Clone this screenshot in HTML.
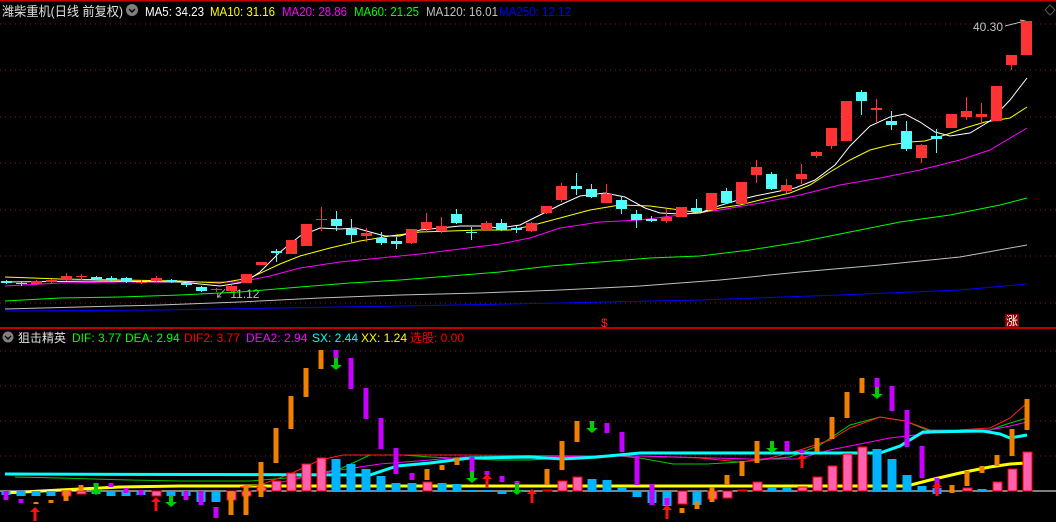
<!DOCTYPE html>
<html><head><meta charset="utf-8"><style>
html,body{margin:0;padding:0;background:#000;width:1056px;height:522px;overflow:hidden}
svg{display:block}
text{font-family:"Liberation Sans","Noto Sans CJK SC",sans-serif;font-size:12px}
</style></head><body>
<svg id="s" width="1056" height="522" xmlns="http://www.w3.org/2000/svg">
<rect width="1056" height="522" fill="#000"/>
<line x1="0" y1="0.5" x2="1056" y2="0.5" stroke="#c00000" stroke-width="2"/>
<line x1="0" y1="328" x2="1056" y2="328" stroke="#c00000" stroke-width="2"/>
<g stroke="#8a1a1a" stroke-dasharray="1,4" stroke-width="1">
<line x1="0" y1="24" x2="1056" y2="24"/><line x1="0" y1="70" x2="1056" y2="70"/><line x1="0" y1="117" x2="1056" y2="117"/><line x1="0" y1="163" x2="1056" y2="163"/><line x1="0" y1="210" x2="1056" y2="210"/><line x1="0" y1="256" x2="1056" y2="256"/><line x1="0" y1="303" x2="1056" y2="303"/>
<line x1="0" y1="351" x2="1056" y2="351"/><line x1="0" y1="386" x2="1056" y2="386"/><line x1="0" y1="421" x2="1056" y2="421"/><line x1="0" y1="456" x2="1056" y2="456"/>
</g>
<g font-size="13">
<text x="2" y="16" fill="#e0e0e0" style="font-size:13px" textLength="121" lengthAdjust="spacingAndGlyphs">潍柴重机(日线 前复权)</text>
<text x="145" y="16" fill="#fff" style="font-size:13px" textLength="59" lengthAdjust="spacingAndGlyphs">MA5: 34.23</text>
<text x="210" y="16" fill="#ffff00" style="font-size:13px" textLength="65" lengthAdjust="spacingAndGlyphs">MA10: 31.16</text>
<text x="282" y="16" fill="#ff00ff" style="font-size:13px" textLength="65" lengthAdjust="spacingAndGlyphs">MA20: 28.86</text>
<text x="354" y="16" fill="#00ff00" style="font-size:13px" textLength="65" lengthAdjust="spacingAndGlyphs">MA60: 21.25</text>
<text x="426" y="16" fill="#c0c0c0" style="font-size:13px" textLength="72" lengthAdjust="spacingAndGlyphs">MA120: 16.01</text>
<text x="499" y="16" fill="#0000ff" style="font-size:13px" textLength="72" lengthAdjust="spacingAndGlyphs">MA250: 12.12</text>
</g>
<circle cx="132" cy="10" r="6" fill="#808080"/><path d="M129 9l3 3 3-3" stroke="#000" fill="none" stroke-width="1.5"/>
<path d="M1045 10l5-5 5 5-5 5z" fill="none" stroke="#555"/>
<circle cx="8" cy="337" r="5.5" fill="#808080"/><path d="M5 336l3 3 3-3" stroke="#000" fill="none" stroke-width="1.5"/>
<text x="18" y="342" fill="#e0e0e0">狙击精英</text>
<text x="72" y="342" fill="#00ff00">DIF: 3.77</text>
<text x="125" y="342" fill="#00ff00">DEA: 2.94</text>
<text x="184" y="342" fill="#ff0000">DIF2: 3.77</text>
<text x="246" y="342" fill="#ff00ff">DEA2: 2.94</text>
<text x="312" y="342" fill="#00ffff">SX: 2.44</text>
<text x="361" y="342" fill="#ffff00">XX: 1.24</text>
<text x="410" y="342" fill="#ff0000">选股: 0.00</text>
<text x="973" y="31" fill="#c0c0c0">40.30</text>
<path d="M1005 26L1025 21M1020 20l5 1-4 3" stroke="#c0c0c0" fill="none"/>
<text x="215" y="298" fill="#c0c0c0">↙ 11.12</text>
<text x="601" y="327" fill="#ff2020" font-size="11">$</text>
<rect x="1005" y="314" width="14" height="13" fill="#8b0000"/>
<text x="1006" y="325" fill="#fff" font-size="11">涨</text>
<g id="g"></g>
</svg>
<script>
var g=document.getElementById('g'),h='';
function pl(pts,c,w){h+='<polyline fill="none" stroke="'+c+'" stroke-width="'+(w||1)+'" points="'+pts.map(function(p){return p.join(',')}).join(' ')+'"/>';}
function r(x,y,w,hh,c,st){h+='<rect x="'+x+'" y="'+y+'" width="'+w+'" height="'+Math.max(hh,1)+'" fill="'+c+'"'+(st?' stroke="'+st+'"':'')+'/>';}
pl([[5,311],[160,310],[280,308],[400,306],[560,303],[700,300],[840,295],[960,290],[1027,284]],'#0000ff');
pl([[5,309],[80,307],[160,305],[240,302],[320,298],[400,295],[480,293],[560,290],[640,286],[720,280],[800,272],[880,265],[960,257],[1027,245]],'#c0c0c0');
pl([[5,301],[60,298],[120,297],[180,295],[240,292],[300,287],[350,283],[400,280],[450,276],[500,272],[550,266],[600,262],[650,258],[700,256],[750,250],[800,242],[850,232],[900,222],[950,215],[1000,205],[1027,198]],'#00ff00');
pl([[5,286],[60,283],[120,282],[180,282],[240,282],[270,276],[300,268],[340,262],[380,258],[420,254],[460,249],[500,244],[530,238],[560,228],[600,222],[640,220],[680,215],[720,210],[760,203],[800,195],[840,185],[880,178],[920,170],[960,160],[990,150],[1027,128]],'#ff00ff');
pl([[5,277],[60,279],[120,280],[180,281],[220,283],[250,278],[280,264],[300,256],[330,248],[360,241],[390,236],[420,232],[450,231],[480,230],[510,230],[530,226],[560,218],[590,210],[620,205],[650,206],[680,210],[700,213],[720,208],[740,205],[760,200],[790,193],[810,185],[830,172],[850,160],[870,150],[890,145],[910,142],[925,141],[945,135],[965,128],[985,122],[1010,118],[1027,107]],'#ffff00');
pl([[5,282],[100,281],[180,282],[220,286],[245,282],[260,272],[280,252],[300,236],[320,228],[340,229],[356,228],[370,232],[385,236],[400,236],[420,230],[440,228],[460,226],[480,226],[500,228],[520,225],[540,215],[560,205],[580,196],[605,193],[625,197],[645,208],[660,213],[680,214],[700,213],[715,207],[735,201],[755,196],[775,192],[795,188],[815,180],[835,165],[850,146],[870,126],[890,117],[905,114],[920,122],[935,132],[950,136],[970,133],[990,121],[1010,100],[1027,78]],'#ffffff');
var C=[[0,281,283,280,284,'c'],[1,283,284,281,286,'c'],[2,281,284,280,285,'r'],[3,280,282,279,283,'r'],[4,276,280,273,281,'r'],[5,276,277,274,280,'r'],[6,277,279,276,280,'c'],[7,278,280,276,282,'c'],[8,278,282,277,283,'c'],[9,282,283,280,284,'r'],[10,278,281,276,283,'r'],[11,280,282,279,283,'c'],[12,283,285,282,287,'c'],[13,287,291,286,292,'c'],[14,289,290,288,292,'r'],[15,286,291,285,292,'r'],[16,274,283,274,283,'r'],[17,262,265,262,265,'r'],[18,251,253,249,262,'c'],[19,240,254,240,254,'r'],[20,224,246,224,246,'r'],[21,219,220,207,231,'r'],[22,219,226,211,231,'c'],[23,229,235,219,242,'c'],[24,233,236,228,242,'r'],[25,238,243,232,245,'c'],[26,241,244,237,249,'c'],[27,229,243,229,244,'r'],[28,222,229,213,232,'r'],[29,226,231,217,233,'r'],[30,214,223,209,224,'c'],[31,232,233,227,240,'c'],[32,223,230,221,231,'r'],[33,223,230,219,231,'c'],[34,228,230,226,233,'c'],[35,223,231,222,232,'r'],[36,206,213,206,214,'r'],[37,186,200,183,202,'r'],[38,186,189,173,195,'c'],[39,189,197,184,198,'c'],[40,194,203,184,203,'r'],[41,200,209,196,214,'c'],[42,214,220,210,228,'c'],[43,219,221,216,222,'c'],[44,217,221,209,223,'r'],[45,207,217,207,217,'r'],[46,208,212,199,213,'c'],[47,193,210,193,210,'r'],[48,191,203,188,204,'c'],[49,182,204,182,204,'r'],[50,167,175,160,183,'r'],[51,174,189,172,190,'c'],[52,185,191,179,193,'r'],[53,174,179,164,184,'r'],[54,152,156,151,158,'r'],[55,128,146,128,149,'r'],[56,101,141,101,141,'r'],[57,92,101,90,115,'c'],[58,108,110,99,123,'r'],[59,121,125,111,130,'c'],[60,131,149,121,151,'c'],[61,145,158,144,163,'r'],[62,136,139,129,153,'c'],[63,114,128,114,128,'r'],[64,111,117,97,120,'r'],[65,114,117,103,123,'r'],[66,86,121,86,121,'r'],[67,55,65,55,70,'r'],[68,21,55,21,55,'r']];
C.forEach(function(c){var x=6+15*c[0],col=c[5]=='r'?'#ff3333':'#54fcfc';h+='<line x1="'+(x+.5)+'" y1="'+c[3]+'" x2="'+(x+.5)+'" y2="'+c[4]+'" stroke="'+col+'"/>';r(x-5,c[1],11,c[2]-c[1],col);});
pl([[5,493],[60,490],[120,487],[180,486],[230,486],[650,486],[907,486],[930,480],[960,473],[990,467],[1010,464],[1027,463]],'#ffff00',3);
pl([[15,477],[60,478],[130,480],[180,481],[250,481],[300,477],[340,469],[370,455],[403,455],[430,457],[497,460],[530,460],[610,455],[640,458],[673,464],[707,464],[740,462],[790,457],[820,445],[850,425],[880,417],[905,421],[927,430],[960,431],[990,430],[1007,424],[1027,418]],'#00c800');
pl([[240,487],[260,485],[290,474],[320,460],[343,455],[400,455],[463,455],[600,456],[640,456],[700,458],[740,462],[770,458],[800,450],[830,440],[850,428],[880,417],[905,421],[930,430],[957,430],[990,428],[1010,418],[1027,403]],'#ff2020');
pl([[273,484],[300,478],[340,470],[380,464],[430,460],[463,457],[530,457],[640,456],[750,459],[797,459],[830,450],[860,444],[890,438],[940,432],[990,430],[1010,426],[1027,422]],'#ff00ff');
pl([[5,474],[370,475],[397,466],[430,463],[470,458],[530,457],[563,459],[597,457],[640,453],[880,453],[900,446],[923,432],[983,431],[1000,434],[1010,438],[1027,435]],'#00ffff',3);
h+='<line x1="0" y1="491" x2="1056" y2="491" stroke="#fff"/>';
var H=[[6,491,495,'b'],[21,491,496,'b'],[36,491,496,'b'],[51,491,496,'b'],[66,491,496,'p'],[81,491,494,'p'],[96,491,494,'b'],[111,491,496,'b'],[126,491,496,'b'],[141,491,495,'b'],[156,491,496,'p'],[171,491,496,'b'],[186,491,496,'b'],[201,491,502,'b'],[216,491,502,'b'],[231,491,500,'p'],[246,491,496,'p'],[261,487,491,'p'],[276,481,491,'p'],[291,473,491,'p'],[306,464,491,'p'],[321,458,491,'p'],[336,459,491,'b'],[351,464,491,'b'],[366,469,491,'b'],[381,476,491,'b'],[396,483,491,'b'],[412,483,491,'b'],[427,482,491,'p'],[442,483,491,'b'],[457,484,491,'b'],[472,490,491,'b'],[487,490,491,'b'],[502,491,494,'b'],[547,490,491,'p'],[562,481,491,'p'],[577,477,491,'p'],[592,479,491,'b'],[607,480,491,'b'],[622,487,491,'b'],[637,491,497,'b'],[652,491,503,'b'],[667,491,506,'b'],[682,491,504,'p'],[697,491,505,'b'],[712,491,499,'p'],[727,491,498,'p'],[742,490,491,'p'],[757,482,491,'p'],[772,487,491,'b'],[787,487,491,'b'],[802,487,491,'p'],[817,477,491,'p'],[832,466,491,'p'],[847,454,491,'p'],[862,447,491,'p'],[877,449,491,'b'],[892,459,491,'b'],[907,475,491,'b'],[922,486,491,'b'],[937,488,494,'b'],[967,488,491,'p'],[982,489,491,'b'],[997,482,491,'p'],[1012,469,491,'p'],[1027,452,491,'p']];
H.forEach(function(b){if(b[3]=='p')r(b[0]-4,b[1],9,b[2]-b[1],'#ff60b0','#ff0000');else r(b[0]-4.5,b[1],9,b[2]-b[1],'#00b4ff');});
var T=[[6,491,500,'p'],[21,499,503,'p'],[36,502,504,'o'],[51,500,503,'o'],[66,491,501,'o'],[81,485,491,'o'],[96,483,486,'o'],[111,483,487,'p'],[126,488,493,'p'],[141,490,495,'p'],[186,491,500,'p'],[201,491,505,'p'],[216,507,518,'p'],[231,491,515,'o'],[246,485,515,'o'],[261,462,497,'o'],[276,428,463,'o'],[291,396,429,'o'],[306,368,397,'o'],[321,350,369,'o'],[336,350,358,'p'],[351,358,389,'p'],[366,388,419,'p'],[381,418,449,'p'],[396,448,474,'p'],[412,473,480,'p'],[427,469,480,'o'],[442,465,470,'o'],[457,458,465,'o'],[472,457,471,'p'],[487,471,475,'p'],[502,476,482,'p'],[517,481,485,'p'],[547,469,485,'o'],[562,441,470,'o'],[577,421,442,'o'],[592,421,424,'p'],[607,423,433,'p'],[622,432,452,'p'],[637,456,485,'p'],[652,484,505,'p'],[667,498,505,'p'],[682,508,513,'o'],[697,501,509,'o'],[712,487,502,'o'],[727,475,485,'o'],[742,461,476,'o'],[757,441,463,'o'],[787,441,451,'p'],[802,450,453,'p'],[817,438,452,'o'],[832,417,439,'o'],[847,392,418,'o'],[862,378,393,'o'],[877,378,387,'p'],[892,386,411,'p'],[907,410,447,'p'],[922,446,478,'p'],[937,478,494,'p'],[952,485,493,'o'],[967,471,486,'o'],[982,466,473,'o'],[997,455,466,'o'],[1012,429,456,'o'],[1027,399,430,'o']];
T.forEach(function(b){r(b[0]-2.5,b[1],5,b[2]-b[1],b[3]=='o'?'#f08000':'#c800ff');});
function up(x,y){h+='<path d="M'+x+' '+y+'l-5 5h3.5v9h3v-9h3.5z" fill="#ff1010"/>';}
function dn(x,y){h+='<path d="M'+x+' '+(y+12)+'l-6-5h4v-7h4v7h4z" fill="#00cc00"/>';}
up(35,507);up(156,497);up(487,474);up(532,489);up(667,505);up(802,454);up(937,482);
dn(96,483);dn(171,495);dn(336,358);dn(472,471);dn(517,483);dn(592,421);dn(772,441);dn(877,387);
g.innerHTML=h;
</script>
</body></html>
